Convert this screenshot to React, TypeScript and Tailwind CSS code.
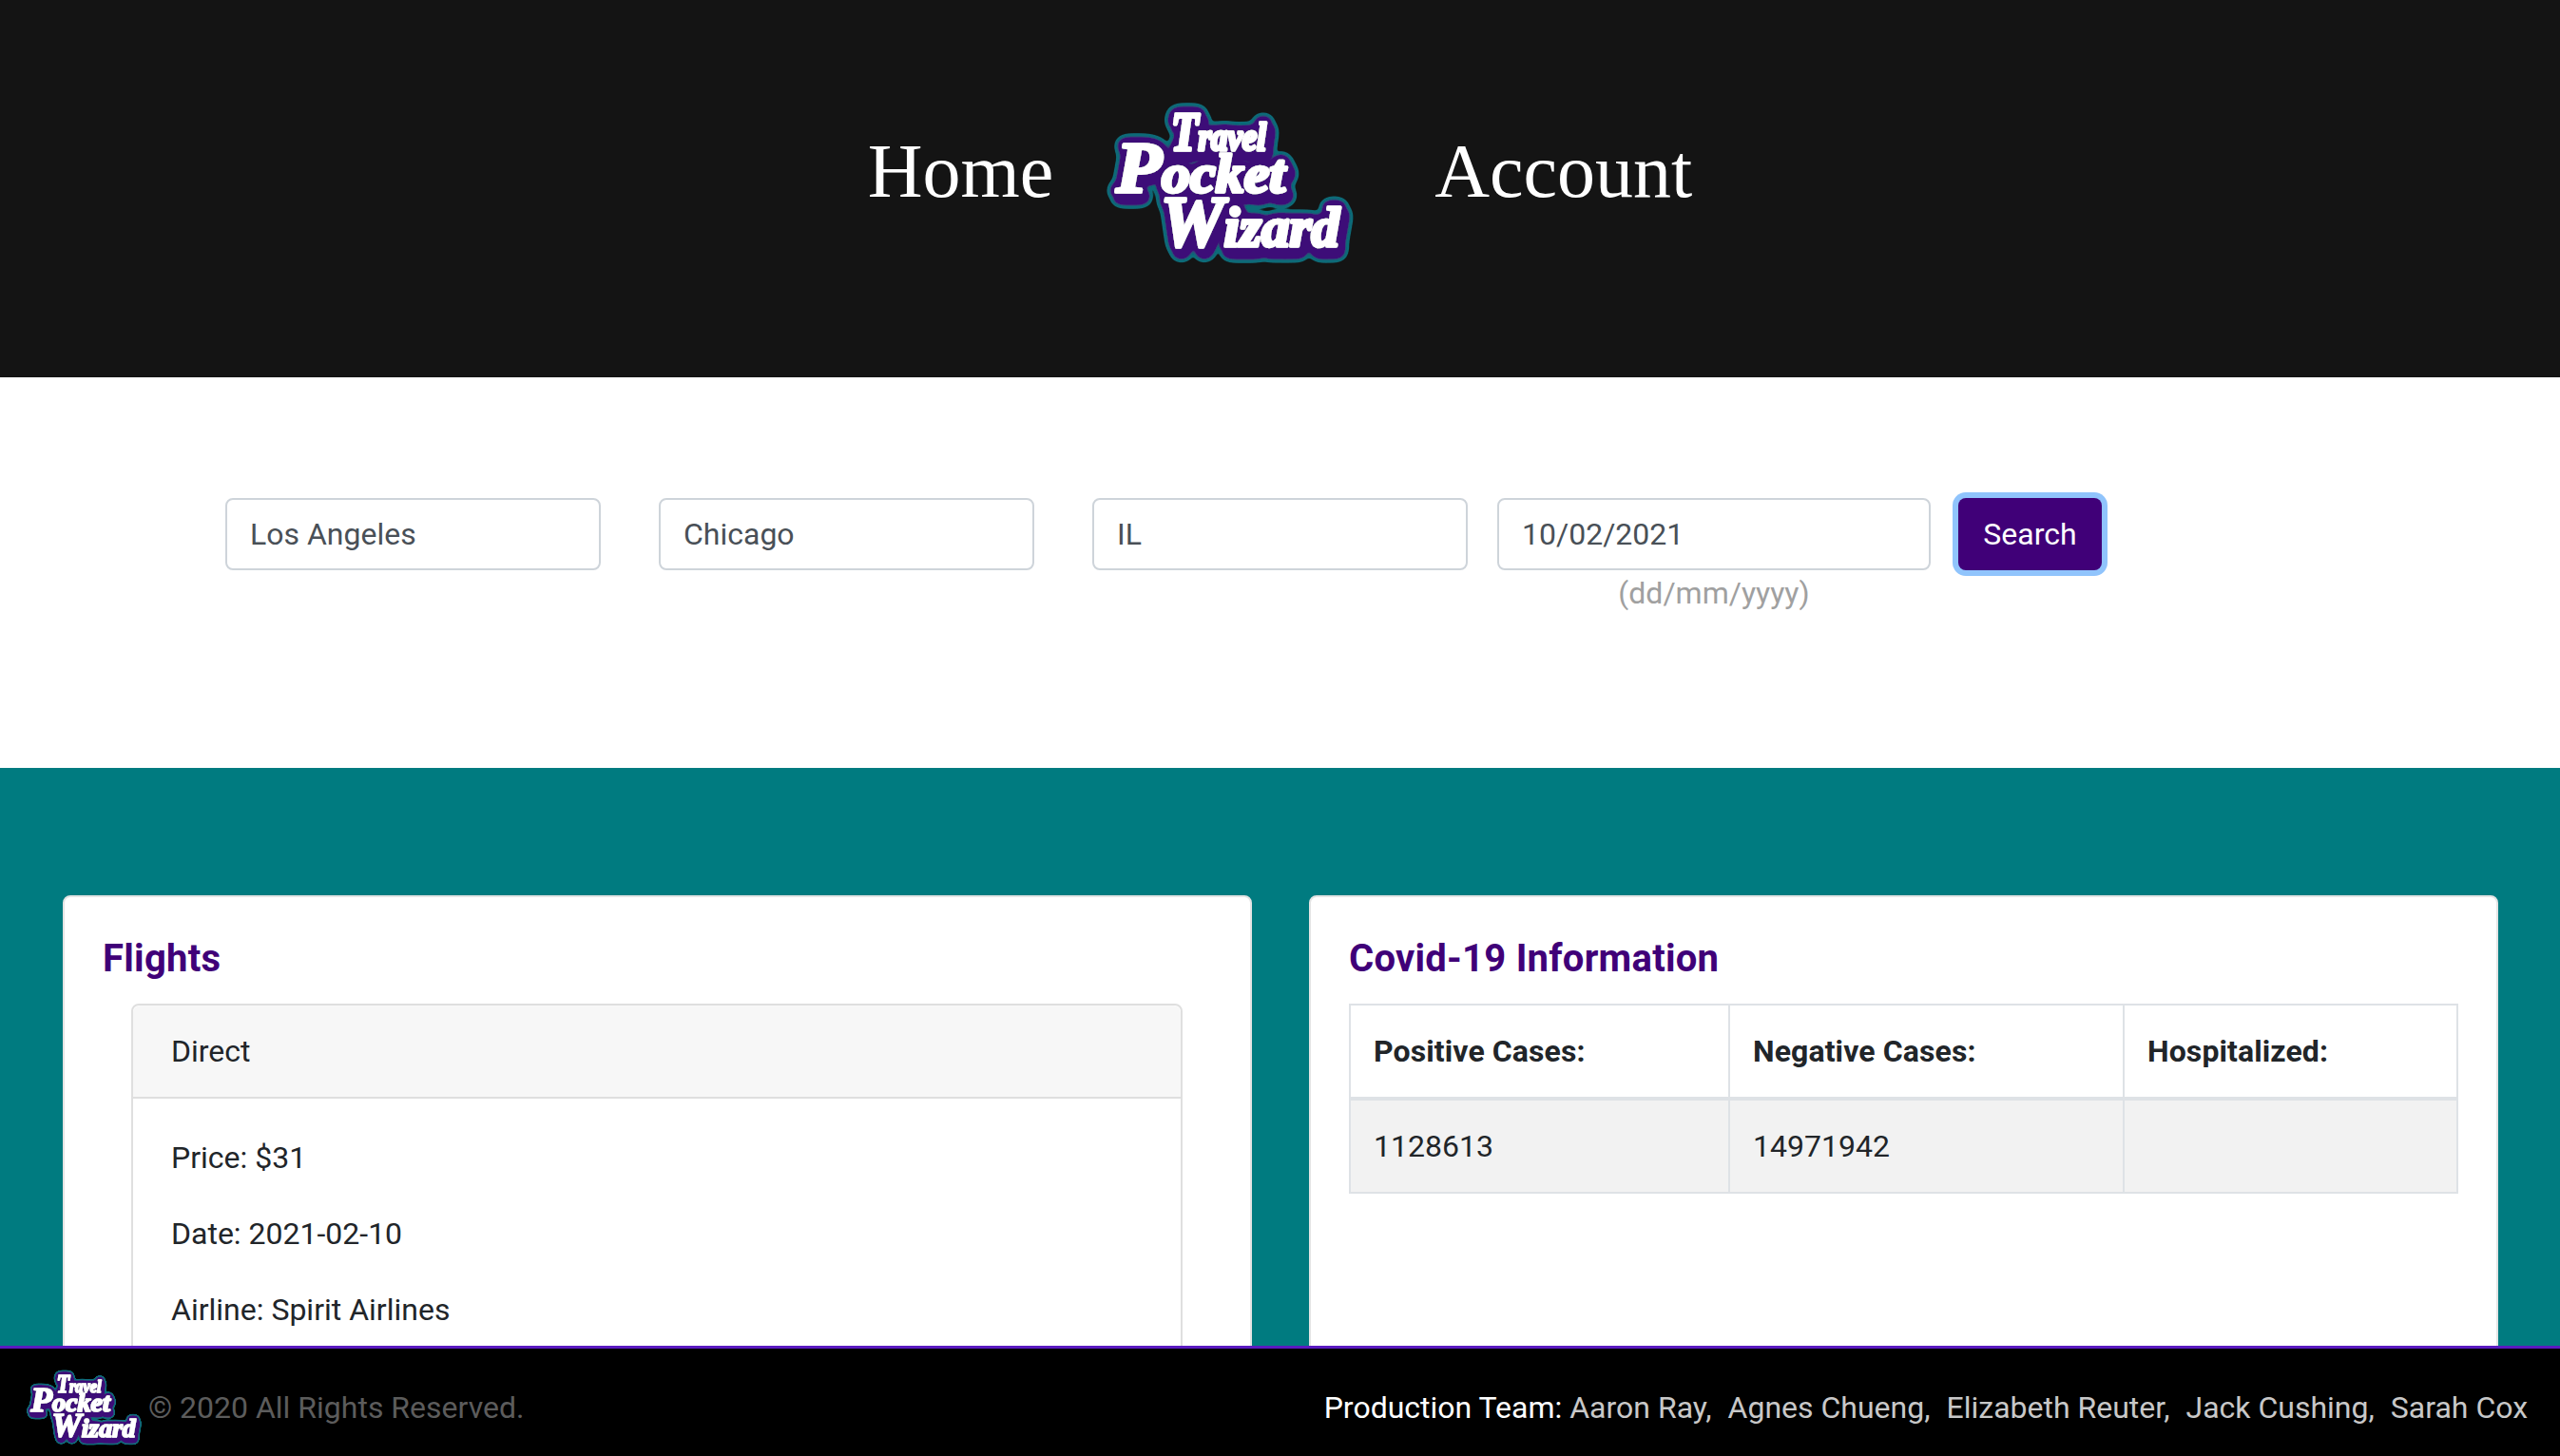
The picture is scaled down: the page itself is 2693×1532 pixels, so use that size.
import { useId } from 'react';

const ROBOTO = 'font-[Roboto,sans-serif]';

const words = [
  { cap: 'T', rest: 'ravel', x: 66, y: 45, capSize: 56, size: 42, length: 100 },
  { cap: 'P', rest: 'ocket', x: 8, y: 89, capSize: 76, size: 58, length: 178 },
  { cap: 'W', rest: 'izard', x: 55, y: 146, capSize: 76, size: 60, length: 188 },
];

// white wordmark; the purple drop shadow and teal outline come from the filter
// (blur + steep alpha ramp keeps the grown edges rounded)
function Logo({ className }: { className: string }) {
  const id = useId();
  return (
    <svg viewBox="-10 -16 273 192" className={className} aria-label="Travel Pocket Wizard">
      <defs>
        <filter id={id} x="-10" y="-16" width="273" height="192" filterUnits="userSpaceOnUse">
          <feGaussianBlur in="SourceAlpha" stdDeviation="4.6" />
          <feComponentTransfer result="fat">
            <feFuncA type="linear" slope="16" intercept="-0.8" />
          </feComponentTransfer>
          <feOffset in="fat" dx="3" dy="6" result="low" />
          <feMerge result="body">
            <feMergeNode in="fat" />
            <feMergeNode in="low" />
          </feMerge>
          <feGaussianBlur in="body" stdDeviation="2.6" />
          <feComponentTransfer result="edge">
            <feFuncA type="linear" slope="16" intercept="-0.8" />
          </feComponentTransfer>
          <feFlood floodColor="#0f6b78" />
          <feComposite in2="edge" operator="in" result="teal" />
          <feFlood floodColor="#3d0a78" />
          <feComposite in2="body" operator="in" result="purple" />
          <feMerge>
            <feMergeNode in="teal" />
            <feMergeNode in="purple" />
            <feMergeNode in="SourceGraphic" />
          </feMerge>
        </filter>
      </defs>
      <g filter={`url(#${id})`}>
        {words.map((w) => (
          <text
            key={w.cap}
            x={w.x}
            y={w.y}
            fontFamily="Liberation Serif, serif"
            fontStyle="italic"
            fontWeight="700"
            fontSize={w.size}
            textLength={w.length}
            lengthAdjust="spacingAndGlyphs"
            fill="#ffffff"
            stroke="#ffffff"
            strokeWidth="3.6"
            strokeLinejoin="round"
          >
            <tspan fontSize={w.capSize}>{w.cap}</tspan>
            {w.rest}
          </text>
        ))}
      </g>
    </svg>
  );
}

function Header() {
  return (
    <header className="flex h-[397px] shrink-0 items-start justify-center bg-[#141414] pt-[97px]">
      <a className="mt-[35px] font-['Liberation_Serif',serif] text-[80px] leading-[96px] text-white">Home</a>
      <div className="w-[401px] pl-[48px]">
        <Logo className="h-[192px] w-[273px]" />
      </div>
      <a className="mt-[35px] font-['Liberation_Serif',serif] text-[80px] leading-[96px] text-white">Account</a>
    </header>
  );
}

const inputClass =
  'h-[76px] rounded-lg border-2 border-[#ced4da] bg-white px-[24px] text-[32px] text-[#495057] outline-none';

function SearchForm() {
  return (
    <section className="flex h-[411px] shrink-0 items-start bg-white pl-[237px] pt-[127px]">
      <input className={`${inputClass} mr-[61px] w-[395px]`} defaultValue="Los Angeles" />
      <input className={`${inputClass} mr-[61px] w-[395px]`} defaultValue="Chicago" />
      <input className={`${inputClass} mr-[31px] w-[395px]`} defaultValue="IL" />
      <div className="mr-[29px] flex w-[456px] flex-col items-center">
        <input className={`${inputClass} w-full`} defaultValue="10/02/2021" />
        <span className="text-[32px] leading-[48px] text-[#a0a0a0]">(dd/mm/yyyy)</span>
      </div>
      <button className="h-[76px] w-[151px] rounded-lg bg-[#400078] text-[32px] text-white shadow-[0_0_0_6px_#90c4fc]">
        Search
      </button>
    </section>
  );
}

function Card({ title, children }: { title: string; children: React.ReactNode }) {
  return (
    <div className="h-[560px] w-[1251px] rounded-lg border-2 border-[#e4e4e4] bg-white px-[40px] pt-[41px]">
      <h5 className="mb-[23px] text-[40px] font-bold leading-[48px] tracking-[0.25px] text-[#400078]">{title}</h5>
      {children}
    </div>
  );
}

function FlightCard() {
  const rows = ['Price: $31', 'Date: 2021-02-10', 'Airline: Spirit Airlines'];
  return (
    <div className="ml-[30px] mr-[31px] rounded-lg border-2 border-[#dfdfdf]">
      <div className="h-[98px] rounded-t-lg border-b-2 border-[#dfdfdf] bg-[#f7f7f7] px-[40px] py-[24px] leading-[48px]">
        Direct
      </div>
      <div className="px-[40px] pt-[38px]">
        {rows.map((r) => (
          <p key={r} className="mb-[32px] leading-[48px]">
            {r}
          </p>
        ))}
      </div>
    </div>
  );
}

function CovidTable() {
  const th = 'border-2 border-[#dee2e6] border-b-4 p-[24px] text-left font-bold leading-[48px] tracking-[0.1px]';
  const td = 'border-2 border-[#dee2e6] p-[24px] leading-[48px] h-[98px]';
  return (
    <table className="w-full table-fixed border-collapse">
      <thead>
        <tr>
          <th className={`${th} w-[399px]`}>Positive Cases:</th>
          <th className={`${th} w-[415px]`}>Negative Cases:</th>
          <th className={th}>Hospitalized:</th>
        </tr>
      </thead>
      <tbody>
        <tr className="bg-[#f2f2f2]">
          <td className={td}>1128613</td>
          <td className={td}>14971942</td>
          <td className={td}></td>
        </tr>
      </tbody>
    </table>
  );
}

function Footer() {
  const team = ['Aaron Ray,', 'Agnes Chueng,', 'Elizabeth Reuter,', 'Jack Cushing,', 'Sarah Cox'];
  return (
    <footer className="flex h-[116px] shrink-0 items-center justify-between border-t-[3px] border-[#5a1ac0] bg-black pl-[24px] pr-[34px] pt-[11px] text-[32px]">
      <div className="flex items-center">
        <Logo className="h-[90px] w-[128px]" />
        <span className="ml-[4px] text-[#5c5c5c]">© 2020 All Rights Reserved.</span>
      </div>
      <div className="flex gap-[17px] text-[#c8c8c8]">
        <span>
          <span className="text-white">Production Team:</span> {team[0]}
        </span>
        {team.slice(1).map((t) => (
          <span key={t}>{t}</span>
        ))}
      </div>
    </footer>
  );
}

export default function App() {
  return (
    <div className={`flex h-[1532px] flex-col overflow-hidden text-[32px] text-[#212529] ${ROBOTO}`}>
      <Header />
      <SearchForm />
      <main className="flex min-h-0 flex-1 items-start gap-[60px] overflow-hidden bg-[#007b80] pl-[66px] pt-[134px]">
        <Card title="Flights">
          <FlightCard />
        </Card>
        <Card title="Covid-19 Information">
          <CovidTable />
        </Card>
      </main>
      <Footer />
    </div>
  );
}
